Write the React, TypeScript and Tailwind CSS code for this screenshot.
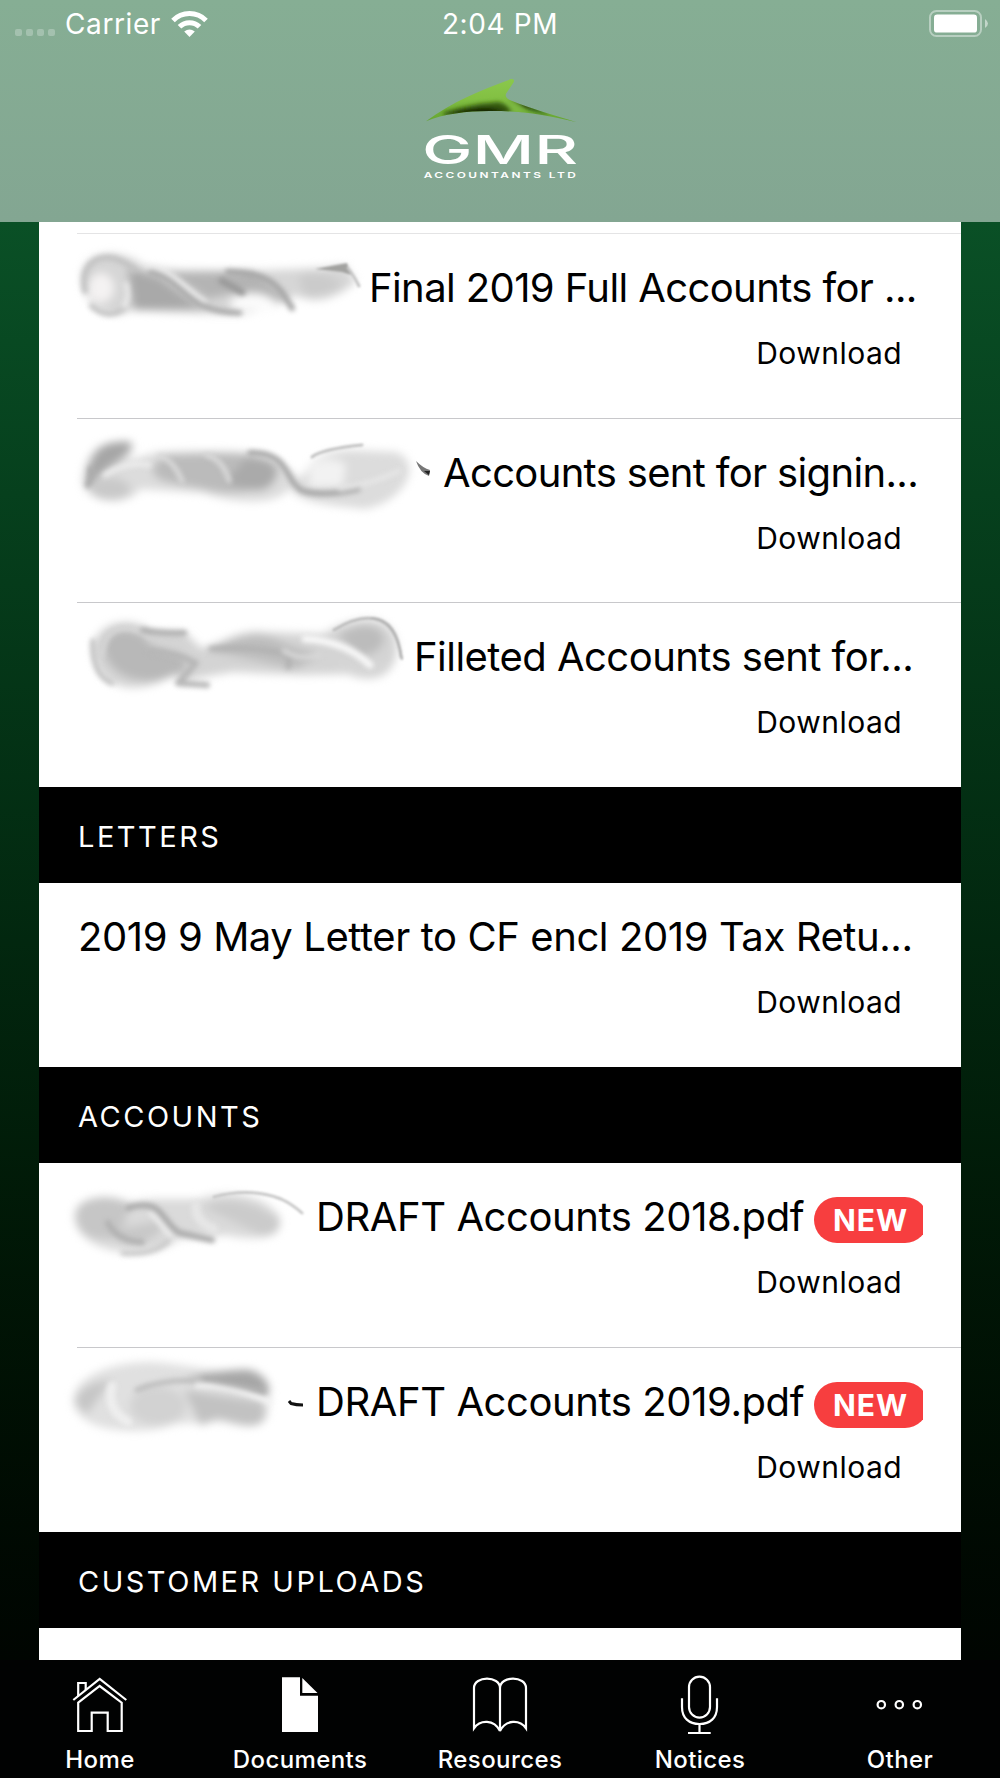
import type { ReactNode } from "react";

/* Smudged client names. Each drawing shares its row's coordinate space:
   x is measured from the screen edge, y from the top of the row. */

function Smudge({ width, children }: { width: number; children?: ReactNode }) {
  return (
    <svg
      className="h-32 shrink-0 overflow-visible"
      style={{ width }}
      viewBox={`39 0 ${width} 128`}
      fill="none"
      strokeLinecap="round"
      aria-hidden="true"
    >
      <defs>
        <filter id="soft" x="-30%" y="-50%" width="160%" height="200%" colorInterpolationFilters="sRGB">
          <feGaussianBlur stdDeviation="4" />
        </filter>
        <filter id="fine" x="-30%" y="-50%" width="160%" height="200%" colorInterpolationFilters="sRGB">
          <feGaussianBlur stdDeviation="2.6" />
        </filter>
        <filter id="thin" x="-30%" y="-50%" width="160%" height="200%" colorInterpolationFilters="sRGB">
          <feGaussianBlur stdDeviation="1.3" />
        </filter>
      </defs>
      {children}
    </svg>
  );
}

const smudgeFinal = (
  <>
    <g filter="url(#soft)">
      <path d="M82 40C86 15 122 14 145 32L180 36C230 37 300 37 345 31L356 48C340 62 320 70 304 64L292 62C280 72 255 80 232 80C200 80 160 78 133 76C110 86 82 76 82 40Z" fill="#d6d6d6" />
      <path d="M128 34L160 44L190 66L206 75L134 76Z" fill="#a9a9a9" />
      <path d="M168 38L250 37Q270 46 288 68L240 58L208 65Z" fill="#b4b4b4" />
      <ellipse cx="101" cy="54" rx="13" ry="15" fill="#f4f2f2" />
      <path d="M228 68Q248 52 272 64L280 76L236 77Z" fill="#fbfbfb" />
      <path d="M298 42Q325 34 343 51Q325 64 305 62Z" fill="#cbcbcb" />
    </g>
    <g filter="url(#fine)">
      <path d="M85 57C78 22 112 14 134 36" stroke="#c2c2c2" strokeWidth="6" />
      <path d="M92 72Q108 86 124 74" stroke="#c6c6c6" strokeWidth="6" />
      <path d="M126 50Q130 64 124 72" stroke="#e8e8e8" strokeWidth="5" />
      <path d="M148 33C174 37 184 54 205 68" stroke="#f0f0f0" strokeWidth="4" />
      <path d="M150 38C173 42 182 61 202 71Q215 78 240 79" stroke="#a6a6a6" strokeWidth="5" />
      <path d="M228 38C275 40 279 54 292 74" stroke="#a6a6a6" strokeWidth="6" />
      <path d="M222 47L242 58" stroke="#999" strokeWidth="7" />
    </g>
    <g filter="url(#thin)">
      <path d="M315 35L347 29L351 41L342 38Z" fill="#a2a2a0" />
      <path d="M348 34Q355 44 359 52" stroke="#c6c6c6" strokeWidth="3" />
    </g>
  </>
);

const smudgeSigning = (
  <>
    <g filter="url(#soft)">
      <path d="M82 64C84 35 97 17 134 25C134 39 122 46 108 53Q128 40 158 33C210 32 264 29 283 45L300 60C312 46 310 34 350 31L396 33C425 44 404 84 364 90C330 86 298 84 290 69C272 92 220 80 203 74L140 70C130 88 88 85 82 64Z" fill="#dcdcdc" />
      <path d="M88 66C88 34 101 20 131 23C131 37 114 42 97 58Z" fill="#a6a6a6" />
      <path d="M166 36C220 35 265 30 278 48C280 76 220 76 205 70L173 64Q151 60 153 48Z" fill="#bbb" />
      <path d="M246 40C286 39 281 66 260 71Q240 71 226 62Z" fill="#aaa" />
      <ellipse cx="110" cy="70" rx="20" ry="11" fill="#c9c9c9" />
      <path d="M309 48Q325 33 346 45L343 67L309 69Z" fill="#f2f2f2" />
    </g>
    <g filter="url(#fine)">
      <path d="M160 37Q174 42 182 62" stroke="#dadada" strokeWidth="5" />
      <path d="M207 36Q224 42 229 62" stroke="#dadada" strokeWidth="5" />
      <path d="M105 56Q127 42 149 46" stroke="#ececec" strokeWidth="5" />
      <path d="M250 34C290 32 285 64 303 72Q324 78 358 70" stroke="#a6a6a6" strokeWidth="5.5" />
      <path d="M340 70Q368 66 399 52" stroke="#e6e6e6" strokeWidth="5" />
      <path d="M88 66Q92 58 91 50" stroke="#aaa" strokeWidth="6" />
    </g>
    <path d="M312 38Q322 30 362 26" stroke="#c4c4c4" strokeWidth="3" filter="url(#thin)" />
    <path d="M416 42Q420 54 429 57L430 51Q423 49 416 42Z" fill="#777" />
    <path d="M424 52L429 56L430 52Z" fill="#222" />
  </>
);

const smudgeFilleted = (
  <>
    <g filter="url(#soft)">
      <path d="M93 43C99 14 140 15 149 28L185 29L201 45C225 40 239 25 266 29L323 31C350 15 386 7 396 36C401 68 380 84 347 71L303 72L233 69L198 75L180 81L177 68C151 92 94 95 93 43Z" fill="#d4d4d4" />
      <path d="M104 46C104 18 148 26 150 43L184 53L186 66C160 86 109 80 104 46Z" fill="#b8b8b8" />
      <path d="M208 47C230 38 255 23 285 41L318 52L296 66Z" fill="#bdbdbd" />
      <path d="M338 32Q373 13 384 34Q382 52 359 52Z" fill="#bcbcbc" />
      <path d="M340 62Q362 70 386 62" stroke="#d6d6d6" strokeWidth="8" />
    </g>
    <g filter="url(#fine)">
      <path d="M93 38Q92 72 112 80" stroke="#c2c2c2" strokeWidth="5" />
      <path d="M102 52C105 18 134 21 150 34" stroke="#d6d6d6" strokeWidth="5" />
      <path d="M143 27Q157 31 184 30" stroke="#b0b0b0" strokeWidth="6" />
      <path d="M150 48Q176 50 196 60L178 80L207 82" stroke="#b6b6b6" strokeWidth="6" strokeLinejoin="round" />
      <path d="M211 46Q250 43 282 50Q292 54 288 64" stroke="#b1b1b1" strokeWidth="5" />
      <path d="M305 36Q345 38 370 62" stroke="#f8f8f8" strokeWidth="7" />
      <path d="M284 48Q300 58 320 52" stroke="#d8d8d8" strokeWidth="5" />
    </g>
    <g filter="url(#thin)">
      <path d="M334 27C372 4 396 16 401 54" stroke="#bdbdbd" strokeWidth="3" />
      <path d="M372 15C390 16 398 30 402 56" stroke="#b0b0b0" strokeWidth="2" />
    </g>
  </>
);

const smudge2018 = (
  <>
    <g filter="url(#soft)">
      <path d="M74 52C75 33 109 29 128 39L153 36L198 36C225 26 264 30 280 54C285 81 242 76 227 72L178 76C158 98 75 95 74 52Z" fill="#dadada" />
      <path d="M77 50C82 32 113 32 130 41L120 74C90 80 74 68 77 50Z" fill="#c6c6c6" />
      <path d="M203 44Q226 32 257 44L279 56Q282 74 262 72Z" fill="#cbcbcb" />
      <path d="M110 68Q116 84 145 78Q165 71 160 58Z" fill="#c8c8c8" />
    </g>
    <g filter="url(#fine)">
      <path d="M128 45C164 34 161 60 180 70L212 77" stroke="#aaa" strokeWidth="6" />
      <path d="M108 60Q117 78 142 79" stroke="#b0b0b0" strokeWidth="6" />
      <path d="M123 90Q154 92 168 78" stroke="#c8c8c8" strokeWidth="5" />
      <path d="M151 50Q159 58 170 72" stroke="#ececec" strokeWidth="5" />
      <path d="M196 42Q194 58 214 66" stroke="#e6e6e6" strokeWidth="9" />
    </g>
    <path d="M214 34Q250 24 281 36Q292 41 302 50" stroke="#c8c8c8" strokeWidth="3" filter="url(#thin)" />
  </>
);

const smudge2019 = (
  <>
    <g filter="url(#soft)">
      <path d="M73 53C73 28 112 14 150 14C189 16 207 24 235 21C262 16 276 35 268 56C272 82 246 81 224 74L175 76C149 88 76 87 73 53Z" fill="#e0e0e0" />
      <path d="M186 30Q237 20 252 23Q272 33 268 46L224 38Z" fill="#a6a6a6" />
      <path d="M184 42L262 54Q272 80 244 77L216 70L201 78Z" fill="#c2c2c2" />
      <path d="M75 55Q78 36 111 32Q100 48 87 66Z" fill="#c6c6c6" />
      <ellipse cx="158" cy="58" rx="28" ry="19" fill="#d2d2d2" />
    </g>
    <g filter="url(#fine)">
      <path d="M112 38Q106 62 128 74" stroke="#eee" strokeWidth="9" />
      <path d="M137 42Q165 30 203 33" stroke="#bcbcbc" strokeWidth="5" />
      <path d="M197 37Q232 38 270 54" stroke="#f5f5f5" strokeWidth="5" />
      <path d="M204 31L264 44" stroke="#aaa" strokeWidth="4" />
    </g>
    <path d="M289 53L291 55.5Q296 57 303 57" stroke="#111" strokeWidth="3" strokeLinecap="butt" />
  </>
);

type DocumentItem = {
  title: string;
  titleClass: string;
  offset: number;
  smudge?: ReactNode;
  isNew?: boolean;
  rowClass: string;
};

const recentItems: DocumentItem[] = [
  { title: "Final 2019 Full Accounts for ...", titleClass: "tracking-[-0.6px]", offset: 330, smudge: smudgeFinal, rowClass: "h-[184px]" },
  { title: "Accounts sent for signin...", titleClass: "tracking-[-0.66px]", offset: 404, smudge: smudgeSigning, rowClass: "h-[184px]" },
  { title: "Filleted Accounts sent for...", titleClass: "tracking-[-0.53px]", offset: 375, smudge: smudgeFilleted, rowClass: "h-[185px]" },
];

const letterItems: DocumentItem[] = [
  { title: "2019 9 May Letter to CF encl 2019 Tax Retu...", titleClass: "tracking-[-0.41px]", offset: 39, rowClass: "h-[184px]" },
];

const accountItems: DocumentItem[] = [
  { title: "DRAFT Accounts 2018.pdf", titleClass: "tracking-[-0.41px]", offset: 277, smudge: smudge2018, isNew: true, rowClass: "h-[184px]" },
  { title: "DRAFT Accounts 2019.pdf", titleClass: "tracking-[-0.41px]", offset: 277, smudge: smudge2019, isNew: true, rowClass: "h-[185px]" },
];

function DocumentRow({ item, divider }: { item: DocumentItem; divider: boolean }) {
  return (
    <div className={`relative flex items-start ${item.rowClass} ${divider ? "pt-px" : ""}`}>
      {divider && <div className="absolute top-0 right-0 left-[38px] h-px bg-[#c8c8cb]" />}
      <Smudge width={item.offset}>{item.smudge}</Smudge>
      <p className={`mt-[30px] shrink-0 text-[40px] leading-[48px] whitespace-pre text-black ${item.titleClass}`}>
        {item.title}
      </p>
      {item.isNew && (
        <div className={`absolute right-[38px] h-[46px] w-[109px] overflow-hidden ${divider ? "top-[35px]" : "top-[34px]"}`}>
          <div className="flex h-[46px] w-[114px] items-center rounded-full bg-[#f73e3f] pl-[19px] text-[30px] font-bold tracking-[1px] text-white">
            NEW
          </div>
        </div>
      )}
      <button
        className={`absolute right-[59px] text-[30px] leading-[36px] tracking-[0.45px] text-black ${divider ? "top-[102px]" : "top-[101px]"}`}
      >
        Download
      </button>
    </div>
  );
}

function Section({ items }: { items: DocumentItem[] }) {
  return (
    <section className="bg-white">
      {items.map((item, i) => (
        <DocumentRow key={item.title} item={item} divider={i > 0} />
      ))}
    </section>
  );
}

function SectionHeader({ children }: { children: ReactNode }) {
  return (
    <h2 className="flex h-24 items-center bg-black pt-[3px] pl-[39px] text-[29px] tracking-[2.5px] text-white">
      {children}
    </h2>
  );
}

function StatusBar() {
  return (
    <div className="grid h-12 grid-cols-3 items-center pr-3 pl-[15px] text-[28px] text-white">
      <div className="flex items-center">
        <div className="mt-[17px] flex gap-1">
          {[0, 1, 2, 3].map((dot) => (
            <span key={dot} className="h-[7px] w-[7px] rounded-xs bg-white/25" />
          ))}
        </div>
        <span className="ml-[10px] w-[95px] tracking-[0.6px]">Carrier</span>
        <svg className="ml-[11px] h-7 w-[37px]" viewBox="0 0 37 28" fill="none" stroke="#fff">
          <path d="M2 10.4C11 1.2 26 1.2 35 10.4" strokeWidth="5" />
          <path d="M8.5 16.8C14 11.3 23 11.3 28.5 16.8" strokeWidth="5" />
          <path d="M13.2 21.5Q18.5 17.4 23.8 21.5L18.5 27Z" fill="#fff" stroke="none" />
        </svg>
      </div>
      <span className="-ml-[3px] text-center tracking-[0.6px]">2:04 PM</span>
      <svg className="h-7 w-[60px] justify-self-end" viewBox="0 0 60 28" fill="none">
        <rect x="2" y="1" width="51" height="25" rx="6.5" stroke="#fff" strokeOpacity=".42" strokeWidth="2" />
        <rect x="6" y="4.6" width="43" height="18" rx="3.2" fill="#fff" />
        <path d="M57 9Q63 13.5 57 18Z" fill="#fff" fillOpacity=".5" />
      </svg>
    </div>
  );
}

function Logo() {
  return (
    <svg className="mx-auto mt-3 h-[140px] w-[200px]" viewBox="0 0 600 420">
      <defs>
        <linearGradient id="swoosh" x1="0" y1="0" x2="0" y2="1">
          <stop offset="0" stopColor="#8bc94d" />
          <stop offset=".45" stopColor="#83c043" />
          <stop offset="1" stopColor="#5fa02c" />
        </linearGradient>
        <clipPath id="swooshClip">
          <path d="M78 184C160 122 240 92 333 57Q345 55 341 67L318 101Q314 112 329 120C400 149 460 164 530 187C430 162 350 152 268 153C200 153 130 162 78 184Z" />
        </clipPath>
        <filter id="shade" x="-20%" y="-50%" width="140%" height="200%">
          <feGaussianBlur stdDeviation="6" />
        </filter>
      </defs>
      <g clipPath="url(#swooshClip)">
        <rect x="70" y="50" width="470" height="145" fill="url(#swoosh)" />
        <g filter="url(#shade)">
          <path d="M128 158Q215 130 296 126Q330 136 336 158L240 164L135 168Z" fill="#35590f" />
          <path d="M140 162Q220 142 270 145Q310 150 318 160L220 164Z" fill="#0a1400" />
          <path d="M322 112Q390 134 450 166L375 143Z" fill="#112004" />
          <path d="M320 122Q350 134 375 162L340 156Z" fill="#7eb943" />
        </g>
      </g>
      <g fill="#fff" fontFamily="Inter, sans-serif">
        <text x="66" y="311" fontSize="118" fontWeight="500" textLength="468" lengthAdjust="spacingAndGlyphs">GMR</text>
        <text x="71" y="354" fontSize="24" fontWeight="600" letterSpacing="5" textLength="464" lengthAdjust="spacingAndGlyphs">ACCOUNTANTS LTD</text>
      </g>
    </svg>
  );
}

const tabs = [
  {
    label: "Home",
    viewBox: "64 64 72 64",
    icon: (
      <>
        <path d="M73.3 90L99.7 69L126.3 90" />
        <path d="M78.2 86.3V73H85.7V80" />
        <path d="M78.2 92.7L99.7 76L121.7 92.7V121H107.7V102.7H91.7V121H78.2Z" />
      </>
    ),
  },
  {
    label: "Documents",
    viewBox: "264 64 72 64",
    icon: (
      <g fill="#fff" stroke="none">
        <path d="M282 67.3H300V85.7H318V122H282Z" />
        <path d="M302.3 68V83H317.5Z" />
      </g>
    ),
  },
  {
    label: "Resources",
    viewBox: "464 64 72 64",
    icon: (
      <path d="M500 121C494 109 480 109.5 474 118.3V78C474 65.5 500 65.5 500 78V121C506 109 520 109.5 526 118.3V78C526 65.5 500 65.5 500 78" />
    ),
  },
  {
    label: "Notices",
    viewBox: "664 64 72 64",
    icon: (
      <>
        <rect x="689" y="66.6" width="21" height="41" rx="10.5" />
        <path d="M682 88.3V97C682 108 689 114 699.5 114C710 114 717 108 717 97V88.3M699.5 114V123M688 123H710.7" />
      </>
    ),
  },
  {
    label: "Other",
    viewBox: "864 64 72 64",
    icon: (
      <>
        <circle cx="881.3" cy="94.7" r="3.7" />
        <circle cx="899.3" cy="94.7" r="3.7" />
        <circle cx="917.3" cy="94.7" r="3.7" />
      </>
    ),
  },
];

export default function App() {
  return (
    <div className="flex h-[1778px] w-[1000px] flex-col overflow-hidden bg-black font-['Inter',sans-serif]">
      <header className="h-[222px] shrink-0 bg-linear-to-b from-[#86ae94] to-[#83a692]">
        <StatusBar />
        <Logo />
      </header>

      <main className="h-[1438px] shrink-0 overflow-hidden bg-linear-to-b from-[#0a5026] to-[#000501] px-[39px]">
        <div className="h-3 bg-white pt-[11px] pl-[38px]">
          <div className="h-0.5 bg-[#e4e4e5]" />
        </div>
        <Section items={recentItems} />
        <SectionHeader>LETTERS</SectionHeader>
        <Section items={letterItems} />
        <SectionHeader>ACCOUNTS</SectionHeader>
        <Section items={accountItems} />
        <SectionHeader>CUSTOMER UPLOADS</SectionHeader>
        <div className="h-8 bg-white" />
      </main>

      {/* Tab bar */}
      <nav className="grid h-[118px] shrink-0 grid-cols-5 bg-[#010202]">
        {tabs.map((tab) => (
          <a key={tab.label} className="flex flex-col items-center pt-[14px] text-white">
            <svg className="h-16 w-[72px]" viewBox={tab.viewBox} fill="none" stroke="#fff" strokeWidth="2.2">
              {tab.icon}
            </svg>
            <span className="mt-[7px] text-[24px] leading-[29px] font-medium tracking-[0.4px]">{tab.label}</span>
          </a>
        ))}
      </nav>
    </div>
  );
}
